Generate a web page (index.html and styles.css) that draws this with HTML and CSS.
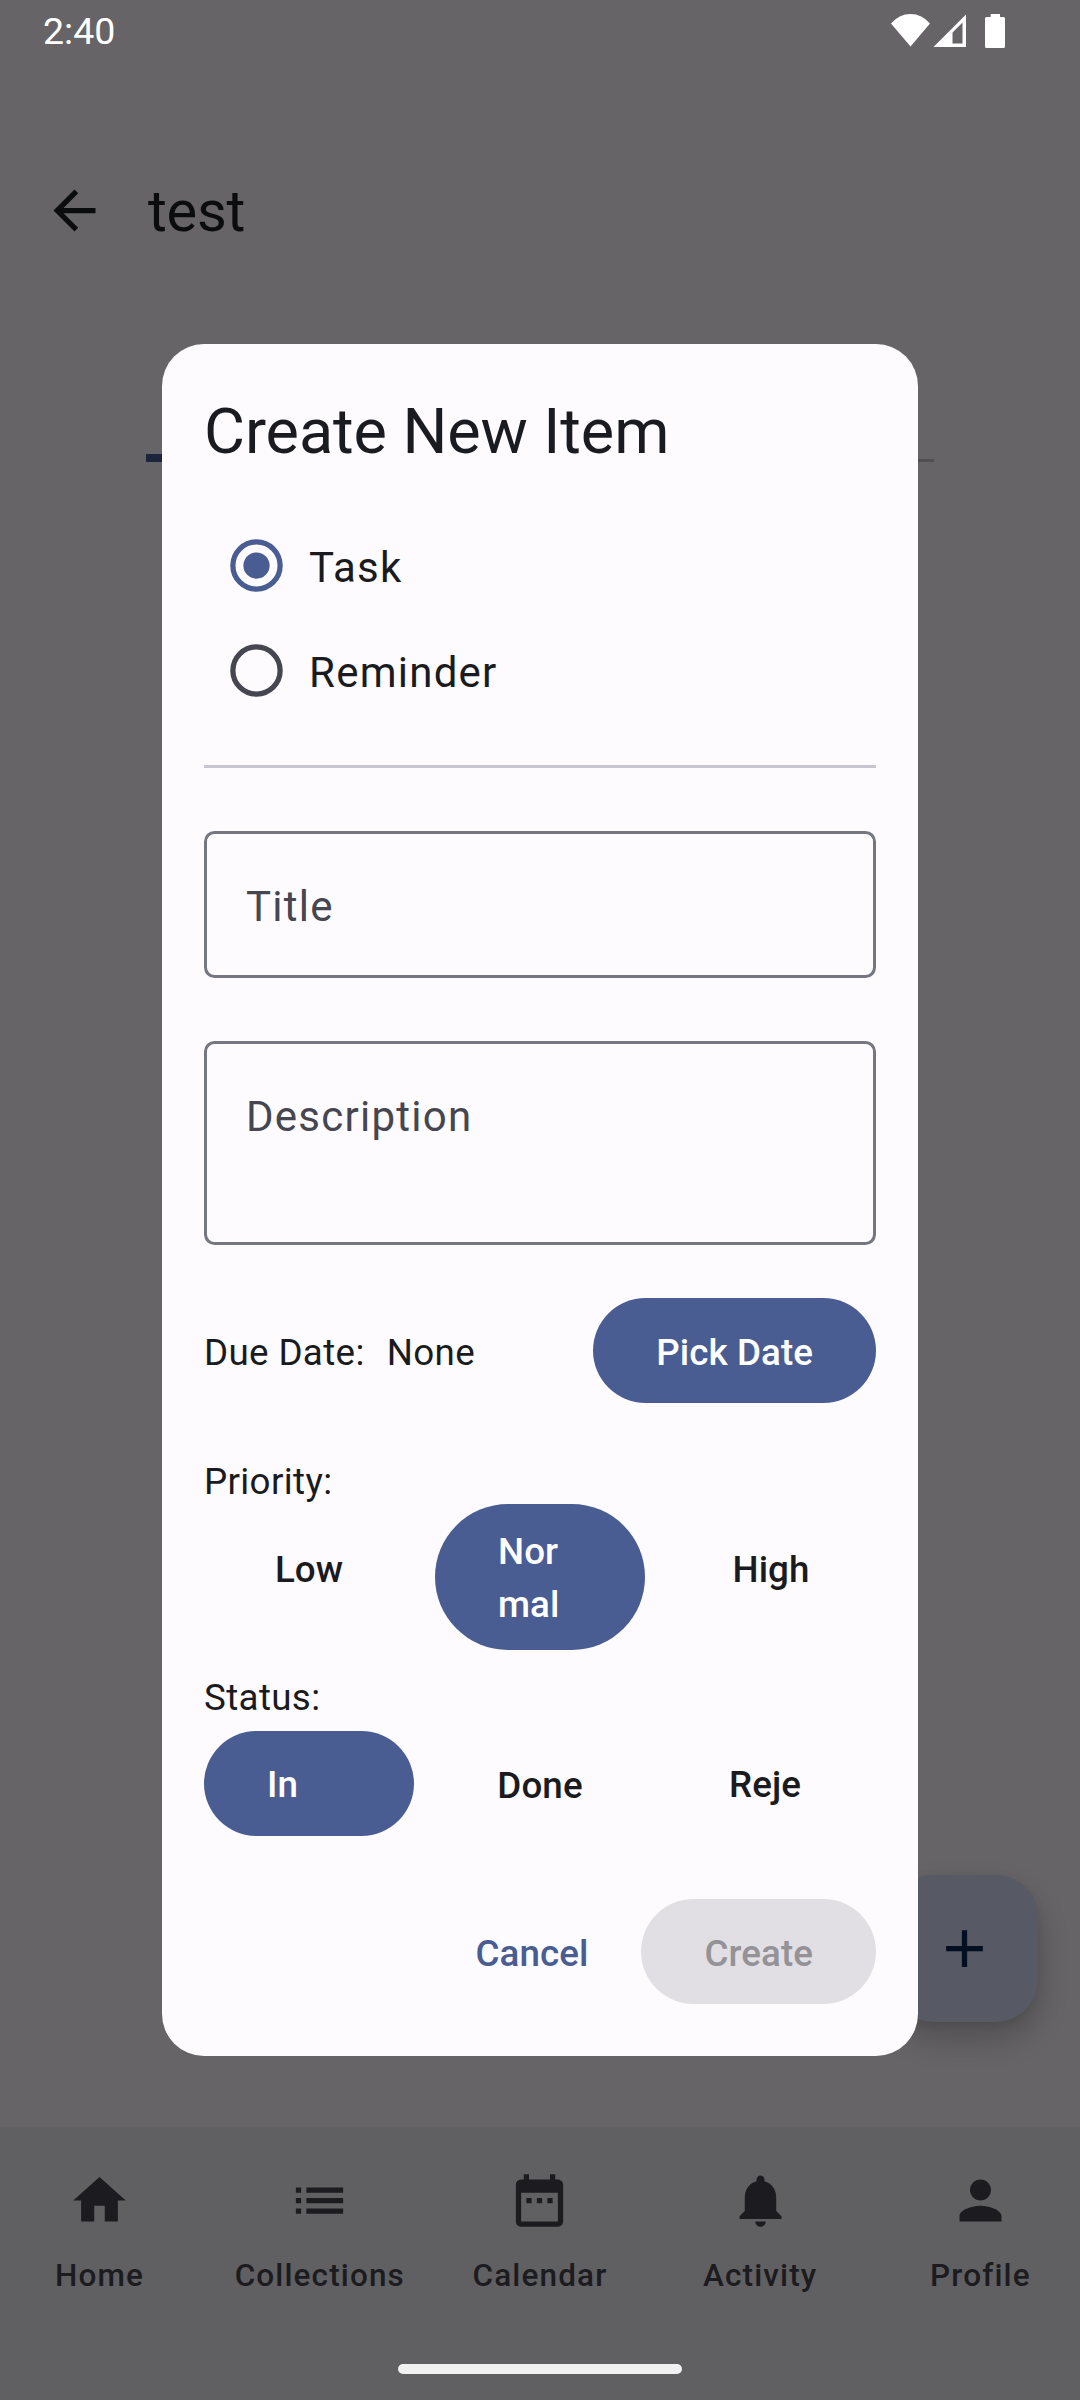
FILE: index.html
```html
<!DOCTYPE html>
<html lang="en">
<head>
<meta charset="utf-8">
<title>test</title>
<link rel="stylesheet" href="styles.css">
</head>
<body>
<div class="screen">
  <header class="status-bar">
    <span class="clock">2:40</span>
    <svg class="status-icons" width="120" height="40" viewBox="0 0 120 40">
      <path d="M1 9.500Q9 0 20.500 0T40 9.500L20.500 32.500Z"/>
      <path fill-rule="evenodd" d="M43.500 33H76V0.500ZM62.500 29.500V18.500L72.500 8.500V29.500Z"/>
      <path d="M100.700 0h9.300v3h3.500q1.500 0 1.500 1.500v28q0 1.500-1.500 1.500h-17q-1.500 0-1.500-1.500v-28q0-1.500 1.500-1.500h4.200z"/>
    </svg>
  </header>
  <div class="app-bar">
    <svg class="back" width="63" height="63" viewBox="0 0 24 24"><path d="M20 11H7.830l5.590-5.590L12 4l-8 8 8 8 1.410-1.410L7.830 13H20v-2z"/></svg>
    <span class="app-title">test</span>
  </div>
  <main class="content">
    <div class="tabs"><div class="indicator"></div></div>
  </main>
  <nav class="nav">
    <div class="nav-item">
      <svg width="63" height="63" viewBox="0 0 24 24"><path d="M10 20v-6h4v6h5v-8h3L12 3 2 12h3v8z"/></svg>
      <span>Home</span>
    </div>
    <div class="nav-item">
      <svg width="63" height="63" viewBox="0 0 24 24"><path d="M3 13h2v-2H3v2zm0 4h2v-2H3v2zm0-8h2V7H3v2zm4 4h14v-2H7v2zm0 4h14v-2H7v2zM7 7v2h14V7H7z"/></svg>
      <span>Collections</span>
    </div>
    <div class="nav-item">
      <svg width="63" height="63" viewBox="0 0 24 24"><path d="M9 11H7v2h2v-2zm4 0h-2v2h2v-2zm4 0h-2v2h2v-2zm2-7h-1V2h-2v2H8V2H6v2H5c-1.110 0-1.990.9-1.990 2L3 20c0 1.100.890 2 2 2h14c1.100 0 2-.9 2-2V6c0-1.100-.9-2-2-2zm0 16H5V9h14v11z"/></svg>
      <span>Calendar</span>
    </div>
    <div class="nav-item">
      <svg width="63" height="63" viewBox="0 0 24 24"><path d="M12 22c1.100 0 2-.9 2-2h-4c0 1.100.890 2 2 2zm6-6v-5c0-3.070-1.640-5.640-4.500-6.320V4c0-.830-.670-1.500-1.500-1.500s-1.500.670-1.500 1.500v.680C7.630 5.360 6 7.920 6 11v5l-2 2v1h16v-1l-2-2z"/></svg>
      <span>Activity</span>
    </div>
    <div class="nav-item">
      <svg width="63" height="63" viewBox="0 0 24 24"><path d="M12 12c2.210 0 4-1.790 4-4s-1.790-4-4-4-4 1.790-4 4 1.790 4 4 4zm0 2c-2.670 0-8 1.340-8 4v2h16v-2c0-2.660-5.330-4-8-4z"/></svg>
      <span>Profile</span>
    </div>
  </nav>
  <div class="gesture"><div class="pill"></div></div>

  <div class="fab"><svg width="63" height="63" viewBox="0 0 24 24"><path d="M19 13h-6v6h-2v-6H5v-2h6V5h2v6h6v2z"/></svg></div>

  <div class="overlay">
    <section class="dialog">
      <h1 class="dialog-title">Create New Item</h1>
      <div class="radios">
        <div class="radio-row selected">
          <svg width="63" height="63" viewBox="0 0 24 24"><circle class="ring" cx="12" cy="12" r="9"/><circle class="dot" cx="12" cy="12" r="5"/></svg>
          <span>Task</span>
        </div>
        <div class="radio-row">
          <svg width="63" height="63" viewBox="0 0 24 24"><circle class="ring" cx="12" cy="12" r="9"/></svg>
          <span>Reminder</span>
        </div>
      </div>
      <div class="divider"></div>
      <div class="field">Title</div>
      <div class="field field-tall">Description</div>
      <div class="due">
        <span>Due Date:</span><span class="due-value">None</span>
        <div class="button filled pick">Pick Date</div>
      </div>
      <div class="label label-priority">Priority:</div>
      <div class="options">
        <div class="button option plain">Low</div>
        <div class="button option filled wrapped">Nor<br>mal</div>
        <div class="button option plain">High</div>
      </div>
      <div class="label label-status">Status:</div>
      <div class="options">
        <div class="button option filled start">In</div>
        <div class="button option">Done</div>
        <div class="button option start">Reje</div>
      </div>
      <div class="actions">
        <div class="button cancel">Cancel</div>
        <div class="button disabled">Create</div>
      </div>
    </section>
  </div>
</div>
</body>
</html>
```
FILE: styles.css
```css
* { box-sizing: border-box; }
body { margin: 0; }
svg { display: block; flex: none; }

.screen {
  position: relative;
  display: flex;
  flex-direction: column;
  width: 1080px;
  height: 2400px;
  overflow: hidden;
  background: #676467;
  color: #1a1b20;
  font-family: Roboto, sans-serif;
}

.status-bar {
  display: flex;
  justify-content: space-between;
  height: 63px;
  padding: 0 70px 0 43px;
  color: #fff;
}
.clock { font-size: 37.5px; line-height: 63px; }
.status-icons { margin-top: 14px; margin-right: 0; fill: #fff; }

.app-bar {
  display: flex;
  align-items: center;
  height: 168px;
  margin-top: 63px;
  padding-left: 43px;
  color: #0b0c0e;
}
.back { fill: #0b0c0e; }
.app-title { margin-left: 42px; padding-top: 2px; font-size: 57.75px; line-height: 74px; letter-spacing: -.3px; }

.content { flex: 1; }
.tabs {
  width: 788px;
  height: 8px;
  margin: 160px 0 0 146px;
  border-bottom: 3px solid #504f53;
}
.indicator { width: 394px; height: 8px; background: #1c253c; }

.nav {
  display: grid;
  grid-template-columns: repeat(5, 1fr);
  column-gap: 21px;
  height: 210px;
  padding-top: 42px;
  background: #606062;
  color: #1c1b1f;
}
.nav-item { display: flex; flex-direction: column; align-items: center; }
.nav-item svg { fill: #1c1b20; }
.nav-item span {
  margin-top: 23px;
  font-size: 31.5px;
  font-weight: 500;
  line-height: 42px;
  letter-spacing: 1.12px;
}
.gesture { display: flex; justify-content: center; height: 63px; padding-top: 27px; background: #606062; }
.pill { width: 284px; height: 10px; border-radius: 5px; background: #f1f1f1; }

.fab {
  position: absolute;
  right: 42px;
  bottom: 378px;
  display: flex;
  align-items: center;
  justify-content: center;
  width: 147px;
  height: 147px;
  border-radius: 42px;
  background: #575965;
  box-shadow: 0 16px 30px rgba(0, 8, 0, .23), 0 2px 8px rgba(0, 8, 0, .06);
}
.fab svg { fill: #000f21; }

.overlay {
  position: absolute;
  inset: 0;
  display: flex;
  align-items: center;
  justify-content: center;
}
.dialog {
  width: 756px;
  height: 1712px;
  padding: 42px;
  border-radius: 42px;
  background: #fefbff;
}
.dialog-title { margin: 0; font-size: 63px; font-weight: 400; line-height: 92px; letter-spacing: -.1px; }

.radios { margin-top: 35px; padding-left: 21px; }
.radio-row { display: flex; align-items: center; gap: 21px; height: 105px; font-size: 42px; letter-spacing: 1.25px; }
.radio-row span { padding-top: 4px; }
.ring { fill: none; stroke: #45464f; stroke-width: 2; }
.selected .ring { stroke: #495d92; }
.dot { fill: #495d92; }

.divider { height: 3px; margin-top: 42px; background: #c6c5d0; }

.field {
  height: 147px;
  margin-top: 63px;
  padding: 2px 39px;
  border: 3px solid #757780;
  border-radius: 10.5px;
  color: #45464f;
  font-size: 42px;
  line-height: 141px;
  letter-spacing: 1.25px;
}
.field-tall { height: 204px; }

.due { display: flex; align-items: center; margin-top: 53px; font-size: 36.75px; letter-spacing: .35px; }
.due span { padding-top: 4px; }
.due .due-value { margin-left: 22px; }

.button {
  display: flex;
  align-items: center;
  justify-content: center;
  height: 105px;
  padding: 4px 63px 0;
  border-radius: 73px;
  font-size: 36.75px;
  font-weight: 500;
  line-height: 53px;
  letter-spacing: .08px;
}
.filled { background: #495d92; color: #fff; }
.pick { margin-left: auto; }

.label { font-size: 36.75px; letter-spacing: .35px; }
.label-priority { margin-top: 56px; line-height: 46px; height: 45px; }
.label-status { margin: 22px 0 8px; line-height: 51px; }

.options { display: grid; grid-template-columns: repeat(3, 210px); justify-content: space-between; align-items: start; }
.option { padding: 4px 0 0; }
.plain { margin-top: 11px; }
.start { justify-content: flex-start; padding: 2px 0 0 63px; }
.wrapped { justify-content: flex-start; align-items: flex-start; height: 146px; padding: 21px 0 0 63px; }

.actions { display: flex; justify-content: flex-end; gap: 21px; margin-top: 63px; }
.cancel { padding: 4px 32px 0; color: #495d92; }
.disabled { background: #e1dfe3; color: #949297; }
```
